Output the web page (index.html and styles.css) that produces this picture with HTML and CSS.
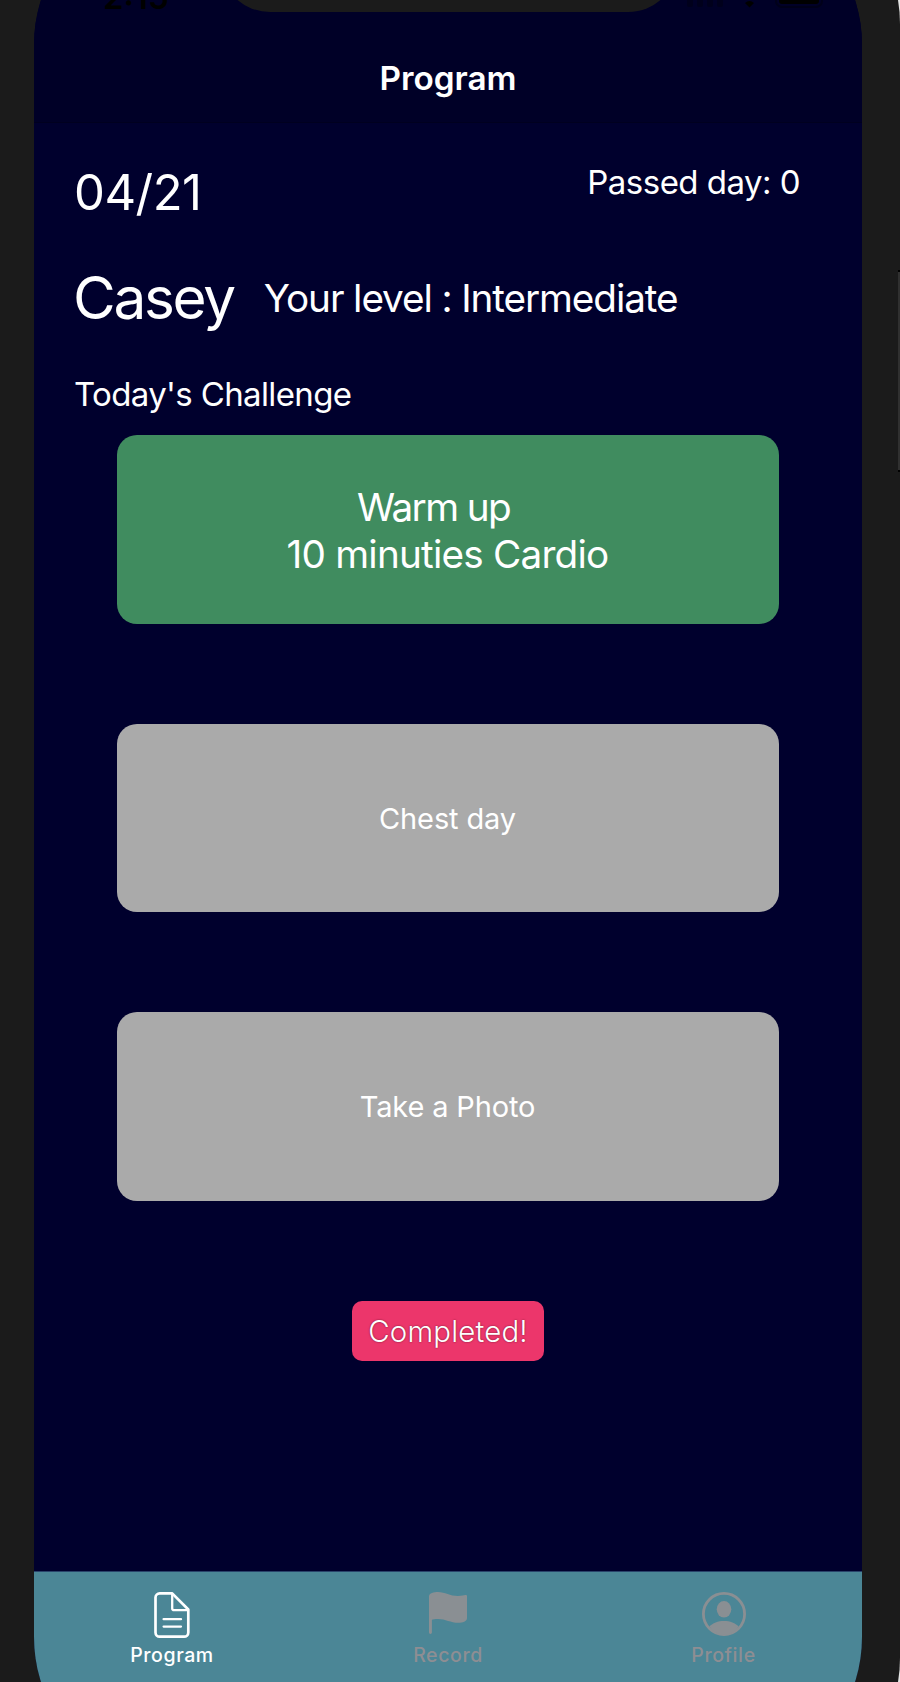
FILE: index.html
```html
<!DOCTYPE html>
<html lang="en">
<head>
<meta charset="utf-8">
<title>Program</title>
<link rel="stylesheet" href="styles.css">
</head>
<body>
<div class="stage">
  <div class="device">
    <div class="screen">
      <header class="header">
        <h1 class="title">Program</h1>
      </header>
      <main class="content">
        <div class="summary">
          <span class="date">04/21</span>
          <span class="passed">Passed day: 0</span>
        </div>
        <div class="user">
          <span class="name">Casey</span>
          <span class="level">Your level : Intermediate</span>
        </div>
        <h2 class="heading">Today's Challenge</h2>
        <div class="cards">
          <div class="card card-active"><span class="warm">Warm up</span><span class="cardio">10 minuties Cardio</span></div>
          <div class="card"><span class="chest">Chest day</span></div>
          <div class="card"><span class="photo">Take a Photo</span></div>
        </div>
        <button class="complete">Completed!</button>
      </main>
      <nav class="tabs">
        <a class="tab tab-active">
          <svg class="icon" width="48" height="48" viewBox="0 0 48 48" fill="none" stroke="currentColor" stroke-width="2.7" stroke-linejoin="round" stroke-linecap="round">
            <path d="M11.700 2.400H24.2L40.3 18.5V41.5a4.2 4.2 0 0 1-4.2 4.2H11.7a4.2 4.2 0 0 1-4.2-4.2V6.6a4.2 4.2 0 0 1 4.2-4.2z"/>
            <path stroke-width="2.3" d="M24.2 3V17.2a2 2 0 0 0 2 2H40M15.6 28.2H33M15.6 35.6H33"/>
          </svg>
          <span class="t-program">Program</span>
        </a>
        <a class="tab">
          <svg class="icon" width="48" height="48" viewBox="0 0 48 48" fill="currentColor">
            <path d="M5 5.4C5 2.2 10 1 14 1c7 0 12 4 20 4 4 0 6-.8 7.2-1 1.200-.2 1.800.3 1.800 1.200V27.200C43 30.200 38.500 31.800 34.500 31.800c-8 0-13-3.800-20.500-3.800-3 0-5 .3-6.100.7V41.500a1.450 1.450 0 0 1-2.900 0z"/>
          </svg>
          <span class="t-record">Record</span>
        </a>
        <a class="tab tab-profile">
          <svg class="icon" width="48" height="48" viewBox="0 0 48 48">
            <circle cx="24" cy="23" r="20.600" fill="none" stroke="currentColor" stroke-width="2.800"/>
            <ellipse cx="24" cy="18.300" rx="7.300" ry="8.300" fill="currentColor"/>
            <path fill="currentColor" d="M9.500 35.500C12.500 32 18 30 24 30s11.500 2 14.500 5.500C35 41 30 44 24 44S13 41 9.500 35.500z"/>
          </svg>
          <span class="t-profile">Profile</span>
        </a>
      </nav>
      <div class="clock">2:15</div>
      <div class="notch"></div>
      <svg class="status" width="140" height="10" viewBox="0 0 140 10">
        <g fill="#00001c"><rect x="0" y="-8" width="6" height="15" rx="2"/><rect x="10" y="-8" width="6" height="15" rx="2"/><rect x="20" y="-8" width="6" height="15" rx="2"/><rect x="30" y="-8" width="6" height="15" rx="2"/></g>
        <path d="M58 3q4.500-4 9 0L62.500 7.500z"/>
        <rect x="89" y="-14" width="46" height="21" rx="6" fill="none" stroke="#00001a" stroke-width="2"/>
        <rect x="92" y="-12" width="40" height="16" rx="3"/>
      </svg>
    </div>
    <div class="side-button"></div>
  </div>
</div>
</body>
</html>
```

FILE: styles.css
```css
* { box-sizing: border-box; }
body { margin: 0; background: #e4e4e4; font-family: Inter, sans-serif; color: #fff; }
.stage { height: 1682px; overflow: hidden; }
.device {
  position: relative;
  display: flex;
  height: 1874px;
  margin-top: -96px;
  padding: 31px 38px 31px 34px;
  background: #1b1b1b;
  border-radius: 0 100px 100px 0 / 0 120px 120px 0;
}
.stage::before { content: ""; display: table; }
.screen {
  position: relative;
  display: flex;
  flex-direction: column;
  width: 828px;
  height: 1812px;
  overflow: hidden;
  background: #00002d;
  border-radius: 80px / 110px;
}
.header {
  display: flex;
  justify-content: center;
  height: 188px;
  padding-top: 123px;
  background: #000027;
  border-bottom: 1px solid #00001f;
}
.title { margin: 0; font-size: 33.300px; line-height: 40px; font-weight: 600; }
.content { display: flex; flex-direction: column; height: 1448px; padding: 44px 0 0; white-space: nowrap; }
.summary { display: flex; justify-content: space-between; height: 96px; padding: 0 62px 0 40px; }
.date { font-size: 49px; line-height: 60px; margin-top: -4px; letter-spacing: -.5px; }
.passed { font-size: 33px; line-height: 40px; margin-top: -5px; letter-spacing: -.53px; }
.user { display: flex; align-items: center; gap: 30px; height: 70px; padding-left: 39px; }
.name { font-size: 58.5px; line-height: 70px; letter-spacing: -2.300px; }
.level { font-size: 38.7px; line-height: 48px; letter-spacing: -1.100px; }
.heading { margin: 41px 0 0 40px; font-size: 33px; line-height: 40px; font-weight: 400; letter-spacing: -.64px; }
.cards { display: flex; flex-direction: column; gap: 100px; margin: 21px 83px 0; }
.card {
  display: flex;
  flex-direction: column;
  align-items: center;
  justify-content: center;
  height: 188.500px;
  padding: 2px 1px 0 0;
  border-radius: 20px;
  background: #aaa;
  font-size: 29px;
  line-height: 36px;
  letter-spacing: -.14px;
}
.card-active { padding-top: 4px; background: #408c5f; font-size: 38.700px; line-height: 47px; letter-spacing: -.79px; }
.warm { margin-right: 28px; letter-spacing: -1.600px; }
.complete {
  align-self: center;
  width: 192px;
  height: 60px;
  margin-top: 100px;
  padding: 0;
  border: 0;
  border-radius: 10px;
  background: #ec366b;
  color: #fff;
  font: 300 29.400px/61px Inter, sans-serif;
  letter-spacing: .2px;
  text-shadow: 0 0 2px #0008;
}
.tabs {
  display: grid;
  grid-template-columns: repeat(3, 1fr);
  flex: 1;
  padding-top: 19px;
  border-top: 1px solid #29436a;
  background: #4b8696;
  color: #8e8e93;
}
.tab { display: flex; flex-direction: column; align-items: center; gap: 4px; font-size: 19.500px; line-height: 24px; font-weight: 500; letter-spacing: .6px; }
.tab-profile { padding-right: 1px; }
.tab-active { color: #fff; }
.icon { display: block; color: #8a8f93; }
.tab-active .icon { color: #fff; }
.clock { position: absolute; left: 69px; top: 42px; color: #000; font-size: 33px; line-height: 40px; font-weight: 600; }
.notch { position: absolute; left: 186px; top: 0; width: 458px; height: 77px; background: #1b1b1b; border-radius: 0 0 50px 50px; }
.status { position: absolute; left: 653px; top: 65px; }
.side-button { position: absolute; right: 0; top: 366px; width: 2px; height: 202px; background: #303030; border: solid #000; border-width: 2px 0; }
```
